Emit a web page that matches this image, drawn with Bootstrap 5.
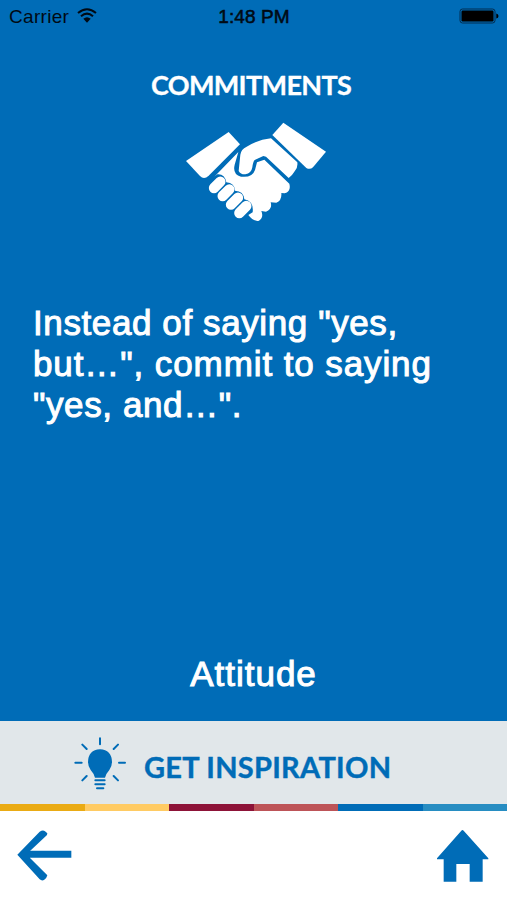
<!DOCTYPE html>
<html lang="en">
<head>
<meta charset="utf-8">
<meta name="viewport" content="width=device-width, initial-scale=1">
<title>Commitments</title>
<link href="https://cdn.jsdelivr.net/npm/bootstrap@5.3.0/dist/css/bootstrap.min.css" rel="stylesheet">
<style>
:root { --brand: #006cb7; }
body { font-family: "Liberation Sans", Arial, sans-serif; background: #fff; }
svg { display: block; flex: none; }
.screen { height: 900px; overflow: hidden; }
.main-pane { height: 721px; background: var(--brand); }
.status-bar { height: 32px; padding: 0 8px 0 9px; color: #000a14; font-size: 19px; line-height: 33px; }
.status-bar > div { flex: 1 1 0; }
.carrier { letter-spacing: .3px; }
.clock { -webkit-text-stroke: .55px #000a14; letter-spacing: .1px; }
.heading { font: 700 27px/36px Lato, "Open Sans", sans-serif; margin: 35px 5px 0 0; letter-spacing: -.65px; -webkit-text-stroke: .3px #fff; }
.shake { margin: 9px 0 0 176px; }
.message { margin: 70px 40px 0 33px; font-size: 35px; line-height: 41px; letter-spacing: .6px; -webkit-text-stroke: 1px #fff; }
.line-wide { letter-spacing: .9px; }
.topic { font-size: 35px; line-height: 41px; margin-bottom: 27px; -webkit-text-stroke: 1px #fff; letter-spacing: 1px; }
.inspire { height: 83px; background: #e1e7ea; color: var(--brand); padding-left: 70px; }
.inspire-label { font: 700 29px/40px Lato, "Open Sans", sans-serif; margin: 9px 0 0 14px; letter-spacing: .27px; -webkit-text-stroke: .4px var(--brand); }
.stripe { height: 7px; }
.stripe > div { flex: 1 1 0; }
.bottom-nav { height: 89px; padding: 17px 18px 0 15px; }
</style>
</head>
<body>
<div class="screen d-flex flex-column">
  <main class="main-pane d-flex flex-column text-white">
    <div class="status-bar d-flex">
      <div class="d-flex"><span class="carrier">Carrier</span>
        <svg class="ms-2" style="margin-top:8px" width="20" height="16" viewBox="0 0 60 48" fill="none" stroke="#000a14" stroke-width="6">
          <path d="M3 15Q30-8 57 15M12 25Q30 9 48 25"/><path d="M19 32Q30 23 41 32L30 44Z" fill="#000a14" stroke="none"/>
        </svg>
      </div>
      <div class="clock text-center">1:48 PM</div>
      <div class="d-flex justify-content-end">
        <svg style="margin-top:8px" width="40" height="16" viewBox="0 0 40 16">
          <rect x="1" y="1" width="35" height="14" rx="2.5" fill="none" stroke="#002c50" stroke-width="1"/>
          <rect x="2.5" y="2.5" width="32" height="11" rx="1.2"/><path d="M37.3 5.5Q39.5 6 39.5 8T37.3 10.5Z"/>
        </svg>
      </div>
    </div>
    <h1 class="heading text-center">COMMITMENTS</h1>
    <svg class="shake" width="160" height="120" viewBox="0 0 480 360" fill="#fff">
      <path d="M30 147L158 60L192 97L98 191Q84 204 72 192Z"/>
      <path d="M322 32L450 119L411 166Q402 174 391 168L289 69Z"/>
      <path d="M187 120L176 158Q169 188 195 194Q229 198 237 174L243 151L265 143L340 215Q346 239 326 244L316 243Q318 266 301 272L284 271Q290 292 270 299L256 297Q264 316 249 326Q233 330 217 309L230 301Q234 268 205 262Q203 237 177 236Q176 213 151 211Q146 185 124 187L115 194Z"/>
      <path d="M188 177L193 128Q195 112 212 104Q247 83 285 79L364 151Q366 168 356 178Q348 192 338 198L270 134L262 132L236 144Q231 149 229 166Q226 184 208 187Q194 188 188 177Z"/>
      <g stroke="#fff" stroke-width="31" stroke-linecap="round"><path d="M114 228L133 209M140 252L160 232M165 278L186 257M190 303L211 282"/></g>
    </svg>
    <p class="message">Instead of saying "yes,<br><span class="line-wide">but…", commit to saying</span><br>"yes, and…".</p>
    <div class="topic text-center mt-auto">Attitude</div>
  </main>
  <div class="inspire d-flex align-items-center">
    <svg width="60" height="60" viewBox="0 0 180 180" fill="none" stroke="#006cb7" stroke-width="6" stroke-linecap="round">
      <path d="M90 16V34M37 35L50 48M144 35L131 48M16 89H35M147 89H165M37 142L50 129M144 142L131 129"/>
      <path d="M75 134Q72 122 62 111Q54 99 54 87Q55 51 90 49Q125 51 126 87Q126 99 118 111Q108 122 105 134Z" fill="#006cb7" stroke="none"/>
      <path d="M76 142H104M76 154H104M81 166H100" stroke-width="6"/>
    </svg>
    <span class="inspire-label">GET INSPIRATION</span>
  </div>
  <div class="stripe d-flex">
    <div style="background:#eaab14"></div><div style="background:#ffcb63"></div><div style="background:#8d1338"></div><div style="background:#bd5458"></div><div style="background:#006cb7"></div><div style="background:#278dc2"></div>
  </div>
  <nav class="bottom-nav d-flex justify-content-between">
    <svg width="60" height="56" viewBox="0 0 180 168" fill="none" stroke="#006cb7" stroke-width="21">
      <path d="M38 79H169"/>
      <path d="M7 80L74 11Q84 5 90 10L97 16L96 21L45 69V90L97 142Q96 149 87 156Q80 159 74 154Z" fill="#006cb7" stroke="none"/>
    </svg>
    <svg width="54" height="56" viewBox="0 0 162 168" fill="#006cb7">
      <path d="M79 8Q82 4 86 8L160 91V94H143V161H104V108H64V161H26V94H6V91Z"/>
    </svg>
  </nav>
</div>
<script src="https://cdn.jsdelivr.net/npm/bootstrap@5.3.0/dist/js/bootstrap.bundle.min.js"></script>
</body>
</html>
